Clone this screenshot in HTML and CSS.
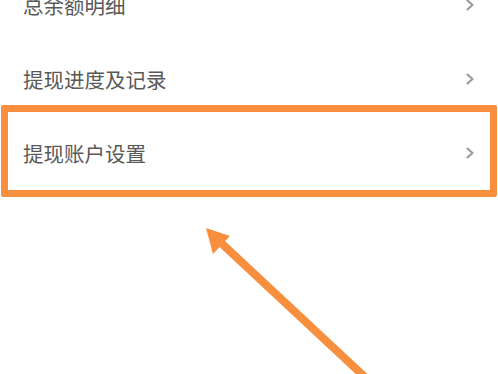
FILE: index.html
```html
<!DOCTYPE html>
<html lang="zh-CN">
<head>
<meta charset="utf-8">
<link rel="stylesheet" href="styles.css">
</head>
<body>
<div class="page">
  <ul class="menu">
    <li class="row"><span class="label">总余额明细</span><svg class="chev" viewBox="0 0 8 12" width="8" height="12"><path d="M1.5 1.5 L6.5 6 L1.5 10.5" /></svg></li>
    <li class="row"><span class="label">提现进度及记录</span><svg class="chev" viewBox="0 0 8 12" width="8" height="12"><path d="M1.5 1.5 L6.5 6 L1.5 10.5" /></svg></li>
    <li class="row"><span class="label">提现账户设置</span><svg class="chev" viewBox="0 0 8 12" width="8" height="12"><path d="M1.5 1.5 L6.5 6 L1.5 10.5" /></svg></li>
  </ul>
  <div class="highlight"></div>
  <svg class="arrow" viewBox="0 0 498 374" width="498" height="374">
    <line x1="219" y1="241" x2="368" y2="380" />
    <polygon points="206,228 230,236 213,254" />
  </svg>
</div>
</body>
</html>
```
FILE: styles.css
```css
html, body {
  margin: 0;
  padding: 0;
  background: #ffffff;
}
.page {
  position: relative;
  width: 498px;
  height: 374px;
  overflow: hidden;
  font-family: "Noto Sans CJK SC", "Noto Sans", sans-serif;
}
.menu {
  list-style: none;
  margin: -32px 0 0 0;
  padding: 0;
}
.row {
  height: 74px;
  display: flex;
  align-items: center;
  justify-content: space-between;
  padding: 0 24px 0 23px;
}
.label {
  font-size: 20.5px;
  color: #595959;
  letter-spacing: 0;
}
.chev {
  display: block;
}
.chev path {
  fill: none;
  stroke: #999999;
  stroke-width: 2.1;
  stroke-linecap: round;
  stroke-linejoin: round;
}
.highlight {
  position: absolute;
  left: 1px;
  top: 105px;
  width: 482px;
  height: 78px;
  border: 7px solid #f78f3e;
  border-radius: 2px;
}
.arrow {
  position: absolute;
  left: 0;
  top: 0;
}
.arrow line {
  stroke: #f78f3e;
  stroke-width: 8;
}
.arrow polygon {
  fill: #f78f3e;
}
```
